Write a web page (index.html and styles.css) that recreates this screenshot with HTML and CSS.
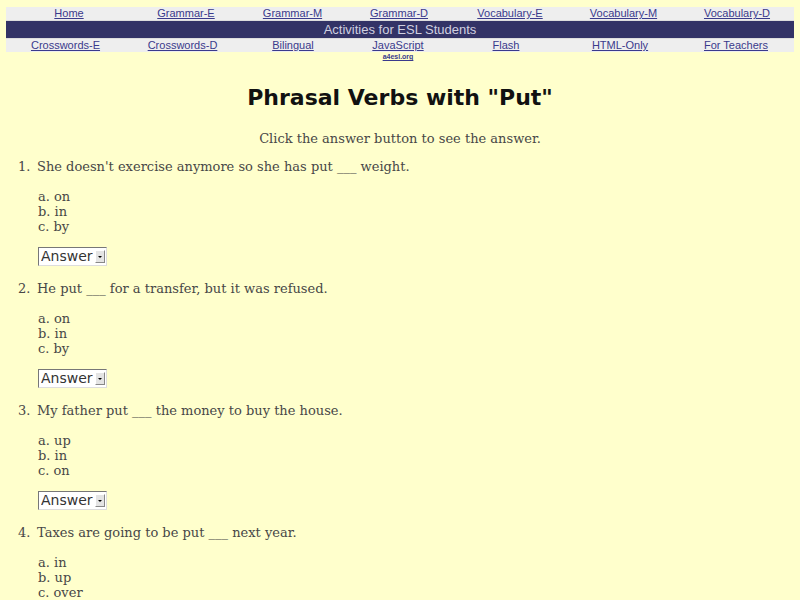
FILE: index.html
```html
<!DOCTYPE html>
<html>
<head>
<meta charset="utf-8">
<title>Phrasal Verbs with "Put"</title>
<link rel="stylesheet" href="styles.css">
</head>
<body>
<nav class="nav">
  <div class="row row-top">
    <a href="#">Home</a>
    <a href="#">Grammar-E</a>
    <a href="#">Grammar-M</a>
    <a href="#">Grammar-D</a>
    <a href="#">Vocabulary-E</a>
    <a href="#">Vocabulary-M</a>
    <a href="#">Vocabulary-D</a>
  </div>
  <div class="row row-mid">Activities for ESL Students</div>
  <div class="row row-bot">
    <a href="#">Crosswords-E</a>
    <a href="#">Crosswords-D</a>
    <a href="#">Bilingual</a>
    <a href="#">JavaScript</a>
    <a href="#">Flash</a>
    <a href="#">HTML-Only</a>
    <a href="#">For Teachers</a>
  </div>
  <div class="row row-site">
    <span></span><span></span><span></span>
    <a href="#">a4esl.org</a>
  </div>
</nav>

<h1 class="title">Phrasal Verbs with "Put"</h1>
<p class="intro">Click the answer button to see the answer.</p>

<ol class="quiz">
  <li>
    <p class="q">She doesn't exercise anymore so she has put ___ weight.</p>
    <p class="opts">a. on<br>b. in<br>c. by</p>
    <span class="sel"><select><option>Answer</option><option>on</option></select><span class="arr"></span></span>
  </li>
  <li>
    <p class="q">He put ___ for a transfer, but it was refused.</p>
    <p class="opts">a. on<br>b. in<br>c. by</p>
    <span class="sel"><select><option>Answer</option><option>in</option></select><span class="arr"></span></span>
  </li>
  <li>
    <p class="q">My father put ___ the money to buy the house.</p>
    <p class="opts">a. up<br>b. in<br>c. on</p>
    <span class="sel"><select><option>Answer</option><option>up</option></select><span class="arr"></span></span>
  </li>
  <li>
    <p class="q">Taxes are going to be put ___ next year.</p>
    <p class="opts">a. in<br>b. up<br>c. over</p>
    <span class="sel"><select><option>Answer</option><option>up</option></select><span class="arr"></span></span>
  </li>
</ol>
</body>
</html>
```

FILE: styles.css
```css
html, body {
  background: #ffffcc;
}
body {
  margin: 7px 6px 8px 6px;
  font-family: "DejaVu Serif", serif;
  font-size: 13px;
  line-height: 15px;
  color: #474747;
}
.nav {
  font-family: "Liberation Sans", Arial, sans-serif;
  font-size: 11px;
}
.row {
  display: grid;
  align-items: center;
  text-align: center;
}
.row a {
  color: #3a3a8c;
  text-decoration: underline;
}
.row-top {
  grid-template-columns: 126px 108px 105px 108px 114px 113px 114px;
  background: #eeeeee;
  height: 13px;
  line-height: 13px;
}
.row-mid {
  display: block;
  background: #333366;
  color: #d0d0e0;
  font-size: 13px;
  height: 17px;
  line-height: 17px;
  border-top: 1px solid #dddddd;
}
.row-bot {
  grid-template-columns: 119px 115px 106px 104px 112px 116px 116px;
  background: #eeeeee;
  height: 13px;
  line-height: 13px;
  border-top: 1px solid #dddddd;
}
.row-site {
  grid-template-columns: 119px 115px 106px 104px;
  font-size: 7px;
  line-height: 9px;
  height: 9px;
  font-weight: bold;
}
.title {
  margin: 21px 0 0 0;
  text-align: center;
  font-family: "DejaVu Sans", sans-serif;
  font-weight: bold;
  font-size: 22px;
  line-height: 32px;
  color: #111111;
}
.intro {
  margin: 17px 0 0 0;
  text-align: center;
}
.quiz {
  margin: 13px 0 0 0;
  padding-left: 31px;
}
.quiz li {
  margin-bottom: 15px;
}
.quiz li::marker {
  content: counter(list-item) ".\2002";
}
.q {
  margin: 0;
}
.opts {
  margin: 15px 0 13px 1px;
}
.sel {
  display: inline-flex;
  align-items: center;
  margin-left: 1px;
  height: 15px;
  padding: 1px;
  background: #ffffff;
  border: 1px solid;
  border-color: #777777 #dddddd #dddddd #777777;
}
.sel select {
  appearance: none;
  -webkit-appearance: none;
  border: 0;
  padding: 0 1px;
  margin: 0;
  background: transparent;
  font-family: "DejaVu Sans", sans-serif;
  font-size: 14px;
  line-height: 15px;
  height: 15px;
  color: #333333;
  outline: none;
}
.arr {
  width: 10px;
  height: 13px;
  margin-left: 1px;
  background: #e4e4e4;
  border: 1px solid;
  border-color: #ffffff #888888 #888888 #ffffff;
  display: flex;
  align-items: center;
  justify-content: center;
  box-sizing: border-box;
}
.arr::before {
  content: "";
  border-left: 2px solid transparent;
  border-right: 2px solid transparent;
  border-top: 2px solid #000000;
}
```
